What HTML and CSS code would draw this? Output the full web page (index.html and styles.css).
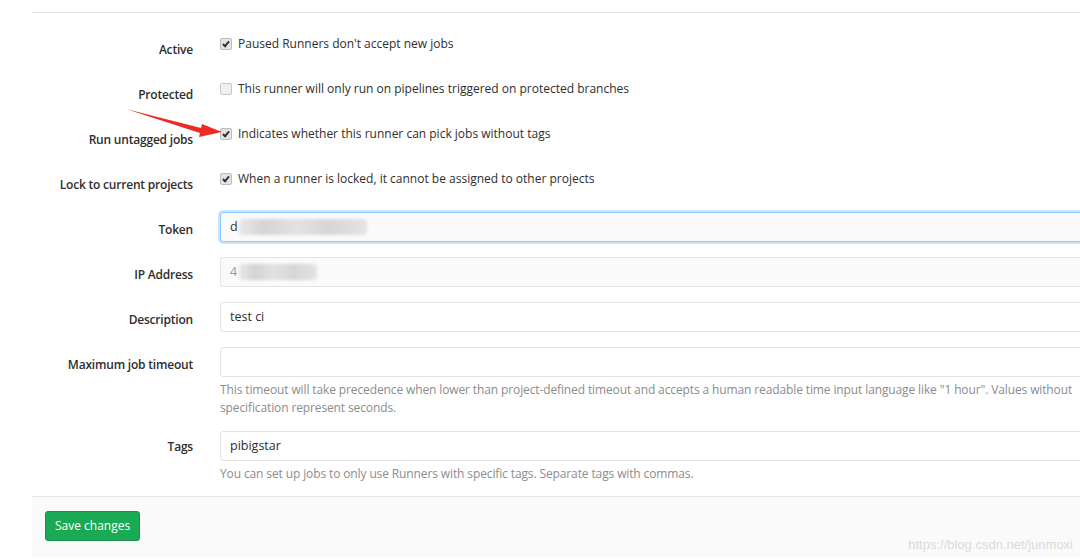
FILE: index.html
```html
<!DOCTYPE html>
<html>
<head>
<meta charset="utf-8">
<link rel="stylesheet" href="styles.css">
</head>
<body>
<div class="page">
  <form class="runner-form">
    <div class="row">
      <label class="label">Active</label>
      <div class="control check-control"><span class="cb checked"></span><span class="cb-text">Paused Runners don't accept new jobs</span></div>
    </div>
    <div class="row">
      <label class="label">Protected</label>
      <div class="control check-control"><span class="cb"></span><span class="cb-text">This runner will only run on pipelines triggered on protected branches</span></div>
    </div>
    <div class="row">
      <label class="label">Run untagged jobs</label>
      <div class="control check-control"><span class="cb checked"></span><span class="cb-text">Indicates whether this runner can pick jobs without tags</span></div>
    </div>
    <div class="row">
      <label class="label">Lock to current projects</label>
      <div class="control check-control"><span class="cb checked"></span><span class="cb-text">When a runner is locked, it cannot be assigned to other projects</span></div>
    </div>
    <div class="row">
      <label class="label">Token</label>
      <div class="control"><div class="input readonly focused"><span>d</span><span class="blur blur-token"></span></div></div>
    </div>
    <div class="row">
      <label class="label">IP Address</label>
      <div class="control"><div class="input readonly"><span class="dim">4</span><span class="blur blur-ip"></span></div></div>
    </div>
    <div class="row">
      <label class="label">Description</label>
      <div class="control"><div class="input">test ci</div></div>
    </div>
    <div class="row">
      <label class="label">Maximum job timeout</label>
      <div class="control"><div class="input"></div>
        <p class="help">This timeout will take precedence when lower than project-defined timeout and accepts a human readable time input language like "1 hour". Values without specification represent seconds.</p>
      </div>
    </div>
    <div class="row row-tags">
      <label class="label">Tags</label>
      <div class="control"><div class="input">pibigstar</div>
        <p class="help">You can set up jobs to only use Runners with specific tags. Separate tags with commas.</p>
      </div>
    </div>
    <div class="footer">
      <button type="button" class="btn-save">Save changes</button>
    </div>
  </form>
</div>
<svg class="arrow" width="110" height="40" viewBox="0 0 110 40">
  <path d="M0 5 L75 24 L76 20 L96 28 L73 33 L74 29 Z" fill="#ee2a24"/>
</svg>
<div class="watermark">https://blog.csdn.net/junmoxi</div>
</body>
</html>
```
FILE: styles.css
```css
html, body {
  margin: 0;
  padding: 0;
  background: #ffffff;
  overflow: hidden;
}
body {
  width: 1080px;
  height: 560px;
  position: relative;
  font-family: "Open Sans", "Noto Sans", sans-serif;
  font-size: 12px;
  color: #2e2e2e;
}
.page {
  padding-left: 32px;
  padding-top: 12px;
}
.runner-form {
  border-top: 1px solid #e5e5e5;
  padding-top: 19px;
  width: 1100px;
}
.row {
  display: flex;
  margin-bottom: 15px;
}
.row-tags {
  margin-top: -1px;
}
.label {
  width: 161px;
  flex: none;
  text-align: right;
  font-weight: 600;
  letter-spacing: -0.2px;
  line-height: 18px;
  padding-top: 9px;
  color: #2e2e2e;
}
.row-tags .label {
  padding-top: 7px;
}
.control {
  margin-left: 27px;
  width: 880px;
}
.check-control {
  height: 30px;
  display: flex;
  align-items: flex-start;
  padding-top: 3px;
  box-sizing: border-box;
  line-height: 18px;
}
.cb {
  width: 10px;
  height: 10px;
  border: 1px solid #c6c6c6;
  border-radius: 2px;
  background: #f0f0f0;
  margin-top: 3px;
  margin-right: 6px;
  position: relative;
  flex: none;
}
.cb.checked {
  background: #e4e4e4;
  border-color: #bdbdbd;
}
.cb.checked::after {
  content: "";
  position: absolute;
  left: 3px;
  top: 1px;
  width: 2px;
  height: 5px;
  border: solid #333;
  border-width: 0 2px 2px 0;
  transform: rotate(40deg);
}
.input {
  height: 30px;
  box-sizing: border-box;
  border: 1px solid #e5e5e5;
  border-radius: 3px;
  background: #fff;
  padding: 0 9px;
  line-height: 28px;
  font-size: 12.5px;
  color: #2e2e2e;
  display: flex;
  align-items: center;
}
.input.readonly {
  background: #fafafa;
}
.input.focused {
  border-color: #8fc7ff;
  box-shadow: 0 0 0 2px rgba(170, 210, 255, 0.6);
}
.dim {
  color: #999;
  filter: blur(0.6px);
}
.blur {
  display: inline-block;
  height: 16px;
  border-radius: 4px;
  background: linear-gradient(90deg, #e8e8e8, #d4d4d4 20%, #e2e2e2 45%, #d6d6d6 70%, #e4e4e4);
  filter: blur(1.5px);
}
.blur-token {
  width: 128px;
  margin-left: 1px;
}
.blur-ip {
  width: 78px;
  margin-left: 2px;
}
.help {
  margin: 4px 0 0 0;
  color: #8c8c8c;
  line-height: 18px;
  letter-spacing: -0.12px;
  width: 860px;
}
.footer {
  margin-top: -2px;
  border-top: 1px solid #e8e8e8;
  background: #fafafa;
  padding: 14px 13px 14px;
  height: 32px;
}
.btn-save {
  font-family: inherit;
  font-size: 12px;
  color: #fff;
  background: #1aaa55;
  border: 1px solid #168f48;
  border-radius: 3px;
  height: 30px;
  padding: 0 9px;
  line-height: 28px;
  cursor: pointer;
}
.arrow {
  position: absolute;
  left: 126px;
  top: 104px;
}
.watermark {
  position: absolute;
  right: 7px;
  top: 537px;
  font-family: "Liberation Sans", sans-serif;
  font-size: 13px;
  color: #dadada;
}
```
